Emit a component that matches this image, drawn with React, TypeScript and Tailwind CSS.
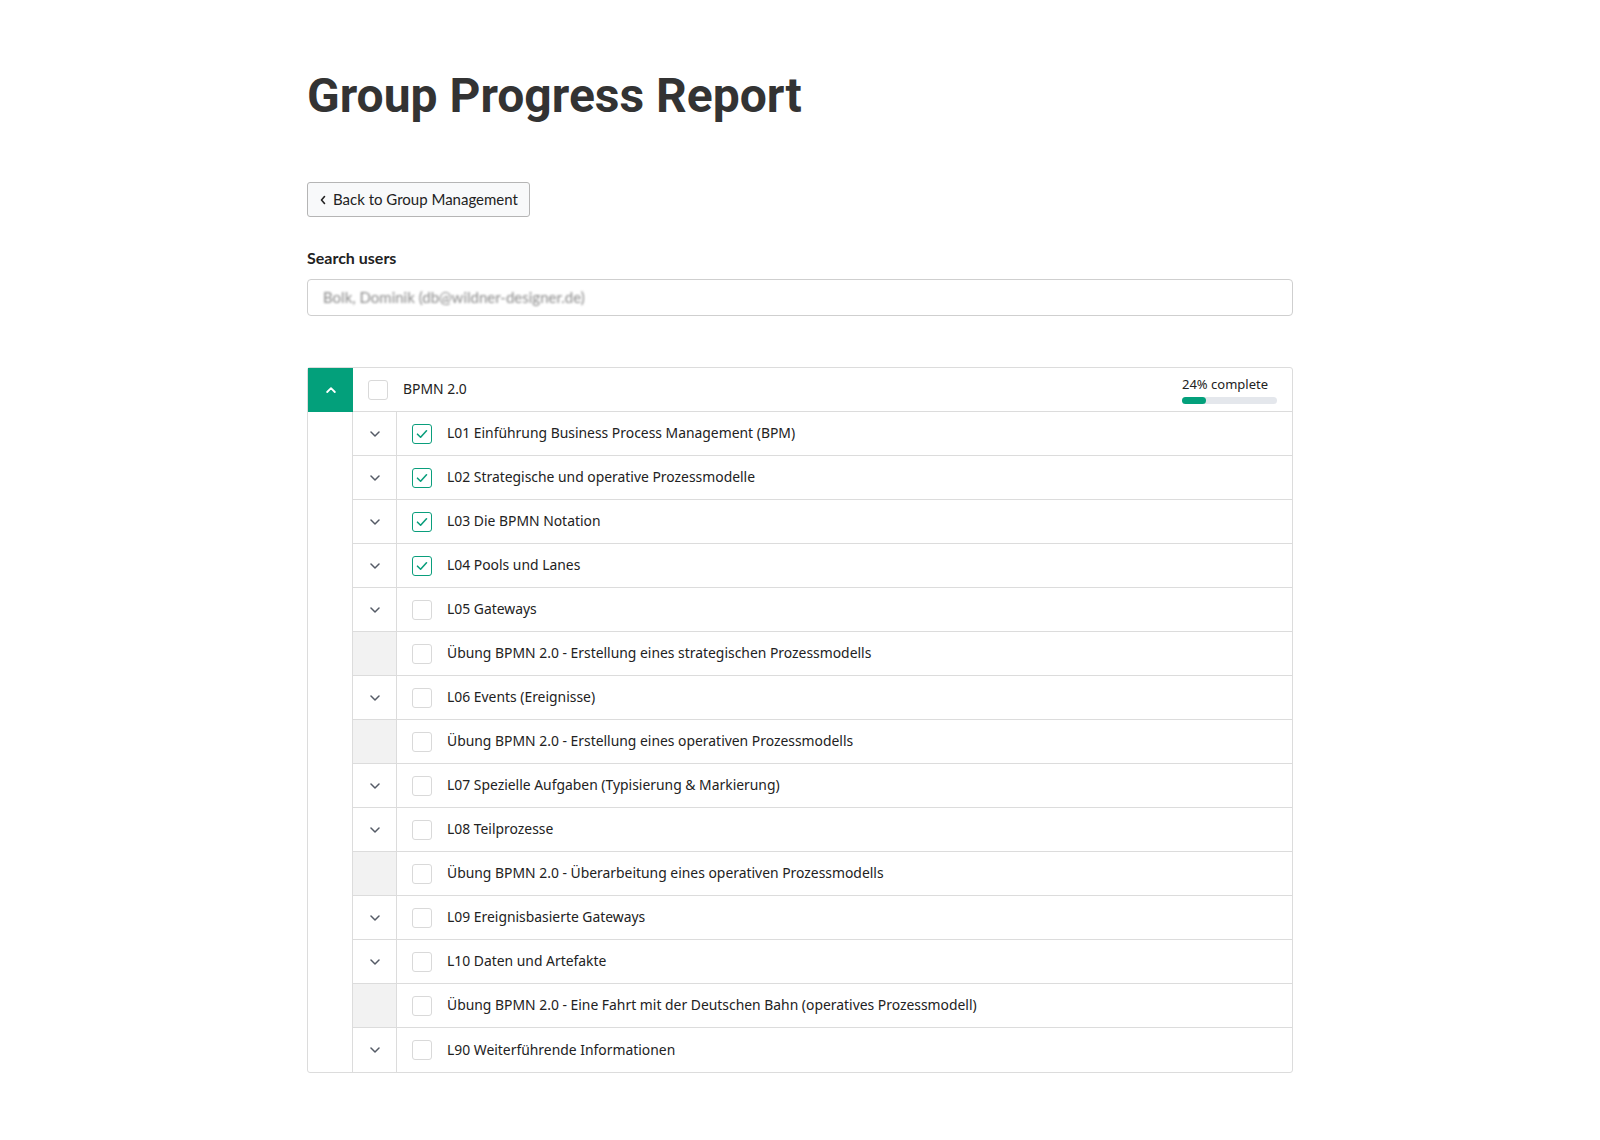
import React from "react";

type Row = { label: string; checked?: boolean; sub?: boolean };

const rows: Row[] = [
  { label: "L01 Einführung Business Process Management (BPM)", checked: true },
  { label: "L02 Strategische und operative Prozessmodelle", checked: true },
  { label: "L03 Die BPMN Notation", checked: true },
  { label: "L04 Pools und Lanes", checked: true },
  { label: "L05 Gateways" },
  { label: "Übung BPMN 2.0 - Erstellung eines strategischen Prozessmodells", sub: true },
  { label: "L06 Events (Ereignisse)" },
  { label: "Übung BPMN 2.0 - Erstellung eines operativen Prozessmodells", sub: true },
  { label: "L07 Spezielle Aufgaben (Typisierung & Markierung)" },
  { label: "L08 Teilprozesse" },
  { label: "Übung BPMN 2.0 - Überarbeitung eines operativen Prozessmodells", sub: true },
  { label: "L09 Ereignisbasierte Gateways" },
  { label: "L10 Daten und Artefakte" },
  { label: "Übung BPMN 2.0 - Eine Fahrt mit der Deutschen Bahn (operatives Prozessmodell)", sub: true },
  { label: "L90 Weiterführende Informationen" },
];

function Checkbox({ checked }: { checked?: boolean }) {
  if (checked) {
    return (
      <div className="w-[20px] h-[20px] rounded-[3px] border-[1.5px] border-[#0a9e7c] flex items-center justify-center bg-white shrink-0">
        <svg width="12" height="10" viewBox="0 0 12 10" fill="none">
          <path d="M1.5 5.2 L4.6 8.2 L10.5 1.8" stroke="#0a9e7c" strokeWidth="1.6" strokeLinecap="round" strokeLinejoin="round" />
        </svg>
      </div>
    );
  }
  return <div className="w-[20px] h-[20px] rounded-[3px] border border-[#d9d9d9] bg-white shrink-0" />;
}

function ChevronDown() {
  return (
    <svg width="10" height="6" viewBox="0 0 10 6" fill="none">
      <path d="M1 1 L5 5 L9 1" stroke="#555b66" strokeWidth="1.5" strokeLinecap="round" strokeLinejoin="round" />
    </svg>
  );
}

export default function App() {
  return (
    <div className="min-h-[1140px] bg-white text-[#333]">
      <div className="w-[986px] mx-auto pt-[68px]">
        <h1 className="font-['Roboto',sans-serif] font-bold text-[48px] leading-[56px] text-[#333]">
          Group Progress Report
        </h1>
        <button className="mt-[58px] h-[35px] pl-[11px] pr-[11px] flex items-center gap-[6px] border border-[#b5b5b5] rounded-[3px] bg-[#f8f9fa] font-['Lato',sans-serif] text-[15px] text-[#222]">
          <svg width="8" height="10" viewBox="0 0 8 10" fill="none">
            <path d="M5.5 1.5 L2.5 5 L5.5 8.5" stroke="#222" strokeWidth="1.6" strokeLinecap="round" strokeLinejoin="round" />
          </svg>
          Back to Group Management
        </button>
        <div className="mt-[31px] font-['Lato',sans-serif] font-bold text-[16px] text-[#222] leading-[19px]">Search users</div>
        <div className="mt-[12px] h-[37px] border border-[#cfcfcf] rounded-[4px] flex items-center px-[15px]">
          <span className="font-['Lato',sans-serif] text-[15px] text-[#8a8a8a] blur-[1.2px]">Bolk, Dominik (db@wildner-designer.de)</span>
        </div>

        <div className="mt-[51px] border border-[#dcdcdc] rounded-[3px] font-['Noto_Sans',sans-serif] text-[13.9px] text-[#222]">
          <div className="flex h-[44px]">
            <div className="w-[45px] bg-[#03a07b] flex items-center justify-center">
              <svg width="10" height="6" viewBox="0 0 10 6" fill="none">
                <path d="M1.2 5 L5 1.2 L8.8 5" stroke="#fff" strokeWidth="1.8" strokeLinecap="round" strokeLinejoin="round" />
              </svg>
            </div>
            <div className="flex-1 flex items-center border-b border-[#dcdcdc] pl-[15px] pr-[15px]">
              <Checkbox />
              <span className="ml-[15px]">BPMN 2.0</span>
              <div className="ml-auto w-[95px] flex flex-col pt-[1px]">
                <span className="text-[13px] leading-[16px]">24% complete</span>
                <div className="mt-[5px] h-[7px] w-full rounded-full bg-[#e4e7ec]">
                  <div className="h-full rounded-full bg-[#03a07b]" style={{ width: "25%" }} />
                </div>
              </div>
            </div>
          </div>
          <div className="flex">
            <div className="w-[45px] border-r border-[#dcdcdc]" />
            <div className="flex-1">
              {rows.map((r, i) => (
                <div
                  key={i}
                  className={
                    "flex h-[44px] " + (i < rows.length - 1 ? "border-b border-[#dcdcdc]" : "")
                  }
                >
                  <div
                    className={
                      "w-[44px] border-r border-[#dcdcdc] flex items-center justify-center " +
                      (r.sub ? "bg-[#f2f2f2]" : "bg-white")
                    }
                  >
                    {!r.sub && <ChevronDown />}
                  </div>
                  <div className="flex-1 flex items-center pl-[15px]">
                    <Checkbox checked={r.checked} />
                    <span className="ml-[15px]">{r.label}</span>
                  </div>
                </div>
              ))}
            </div>
          </div>
        </div>
      </div>
    </div>
  );
}
